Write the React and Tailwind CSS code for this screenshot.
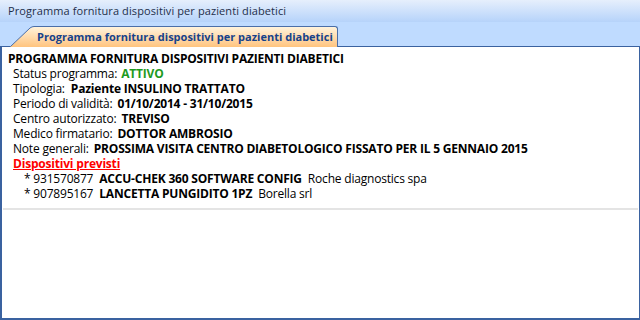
export default function App() {
  return (
    <div className="w-[640px] h-[320px] bg-white flex flex-col overflow-hidden text-[12px] text-black font-['Open_Sans',sans-serif]">
      <div className="h-[22px] shrink-0 bg-gradient-to-b from-[#e6effc] to-[#b6d3fa] flex items-center px-[8px] text-[11px] text-[#1e2f4a] tracking-[0.1px] whitespace-nowrap">
        Programma fornitura dispositivi per pazienti diabetici
      </div>
      <div className="h-[24px] shrink-0 bg-[#bfdbff] flex items-end pl-[10px] relative z-10">
        <svg width="24" height="21" viewBox="0 0 24 21" className="block -mb-[1px]">
          <defs>
            <linearGradient id="tg" x1="0" y1="0" x2="0" y2="1">
              <stop offset="0" stopColor="#fff3dc" />
              <stop offset="1" stopColor="#ffc47e" />
            </linearGradient>
          </defs>
          <path d="M0 21 L20 2 Q22 0.5 24 0.5 L24 21 Z" fill="url(#tg)" />
          <path d="M0.5 20.5 L20 2 Q22 0.5 24 0.5" fill="none" stroke="#4a6ea8" strokeWidth="1" />
        </svg>
        <div className="h-[21px] -mb-[1px] w-[304px] bg-gradient-to-b from-[#fff3dc] to-[#ffc47e] border-t border-r border-[#4a6ea8] rounded-tr-[3px] flex items-center font-bold text-[11px] text-[#15428b] tracking-[0px] pl-[3px] whitespace-nowrap">
          Programma fornitura dispositivi per pazienti diabetici
        </div>
      </div>
      <div className="flex-1 border-t border-r border-b-2 border-l-2 border-[#3a62a0] bg-white flex flex-col">
        <div className="pt-[4px] pl-[6px] flex flex-col tracking-[-0.2px] whitespace-nowrap">
          <div className="h-[15px] leading-[15px] font-bold">PROGRAMMA FORNITURA DISPOSITIVI PAZIENTI DIABETICI</div>
          <div className="pl-[5px] flex flex-col">
            <div className="h-[15px] leading-[15px]">Status programma:<span className="ml-[4px] font-bold text-[#1e9a1e]">ATTIVO</span></div>
            <div className="h-[15px] leading-[15px]">Tipologia:<span className="ml-[6px] font-bold">Paziente INSULINO TRATTATO</span></div>
            <div className="h-[15px] leading-[15px]">Periodo di validità:<span className="ml-[5px] font-bold">01/10/2014 - 31/10/2015</span></div>
            <div className="h-[15px] leading-[15px]">Centro autorizzato:<span className="ml-[5px] font-bold">TREVISO</span></div>
            <div className="h-[15px] leading-[15px]">Medico firmatario:<span className="ml-[5px] font-bold">DOTTOR AMBROSIO</span></div>
            <div className="h-[15px] leading-[15px]">Note generali:<span className="ml-[5px] font-bold">PROSSIMA VISITA CENTRO DIABETOLOGICO FISSATO PER IL 5 GENNAIO 2015</span></div>
            <div className="h-[15px] leading-[15px] font-bold text-[#ff0000] underline">Dispositivi previsti</div>
            <div className="h-[15px] leading-[15px] pl-[11px]">* 931570877<span className="ml-[6px] font-bold">ACCU-CHEK 360 SOFTWARE CONFIG</span><span className="ml-[6px]">Roche diagnostics spa</span></div>
            <div className="h-[15px] leading-[15px] pl-[11px]">* 907895167<span className="ml-[6px] font-bold">LANCETTA PUNGIDITO 1PZ</span><span className="ml-[6px]">Borella srl</span></div>
          </div>
        </div>
        <div className="mt-[7px] mx-[1px] h-[2px] bg-[#e4e4e4]" />
      </div>
    </div>
  );
}
